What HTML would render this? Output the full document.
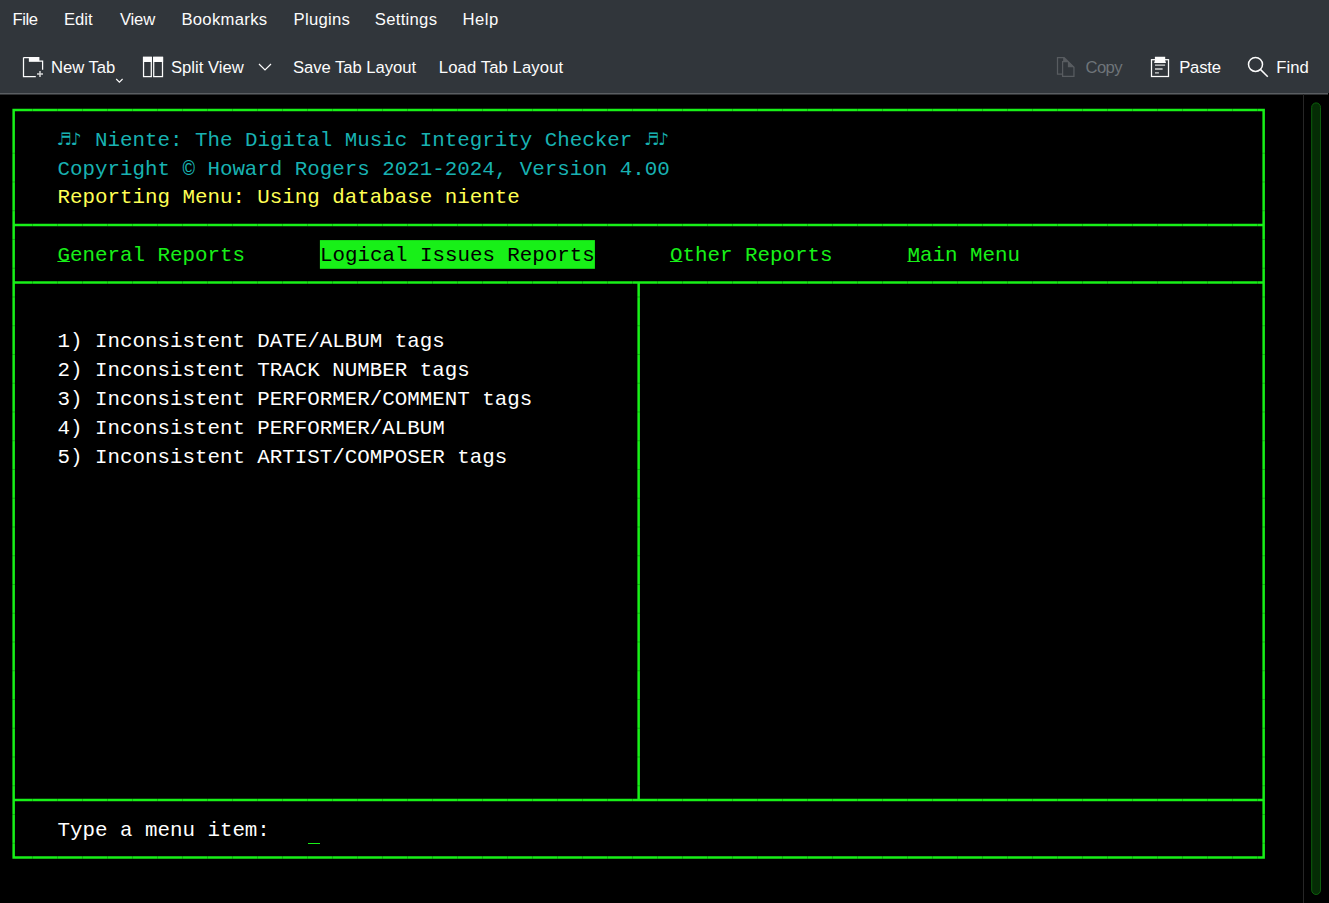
<!DOCTYPE html>
<html lang="en"><head><meta charset="utf-8"><title>Niente - Konsole</title>
<style>
html,body{margin:0;padding:0}
body{width:1329px;height:903px;background:#000;position:relative;overflow:hidden;font-family:"Liberation Sans",sans-serif}
#chrome{position:absolute;left:0;top:0;width:1329px;height:93px;background:#31363b}
.ui{position:absolute;font-size:16.67px;line-height:19px;white-space:pre;color:#fcfcfc}
.t{position:absolute;font-family:"Liberation Mono","DejaVu Sans Mono",monospace;font-size:20.833px;line-height:28px;height:28px;white-space:pre;letter-spacing:0}
.n{position:absolute;width:12.5px;text-align:center;font-family:"DejaVu Sans",sans-serif;font-size:17px;line-height:22px;height:22px}
u{text-decoration:underline;text-decoration-thickness:1.2px;text-underline-offset:0.4px;text-decoration-skip-ink:none}
svg{position:absolute;left:0;top:0}
</style></head>
<body>
<div id="chrome"></div>
<div class="ui" style="left:12.4px;top:10px;letter-spacing:-0.4px;color:#fcfcfc">File</div>
<div class="ui" style="left:64.0px;top:10px;letter-spacing:0.0px;color:#fcfcfc">Edit</div>
<div class="ui" style="left:119.9px;top:10px;letter-spacing:-0.167px;color:#fcfcfc">View</div>
<div class="ui" style="left:181.4px;top:10px;letter-spacing:0.3px;color:#fcfcfc">Bookmarks</div>
<div class="ui" style="left:293.5px;top:10px;letter-spacing:0.283px;color:#fcfcfc">Plugins</div>
<div class="ui" style="left:374.8px;top:10px;letter-spacing:0.286px;color:#fcfcfc">Settings</div>
<div class="ui" style="left:462.6px;top:10px;letter-spacing:0.433px;color:#fcfcfc">Help</div>
<div class="ui" style="left:51.1px;top:58px;letter-spacing:-0.067px;color:#fcfcfc">New Tab</div>
<div class="ui" style="left:171.0px;top:58px;letter-spacing:-0.011px;color:#fcfcfc">Split View</div>
<div class="ui" style="left:293.0px;top:58px;letter-spacing:-0.05px;color:#fcfcfc">Save Tab Layout</div>
<div class="ui" style="left:438.8px;top:58px;letter-spacing:0.107px;color:#fcfcfc">Load Tab Layout</div>
<div class="ui" style="left:1085.4px;top:58px;letter-spacing:-0.533px;color:#6e7479">Copy</div>
<div class="ui" style="left:1179.2px;top:58px;letter-spacing:-0.188px;color:#fcfcfc">Paste</div>
<div class="ui" style="left:1276.3px;top:58px;letter-spacing:0.0px;color:#fcfcfc">Find</div>
<svg width="1329" height="903" viewBox="0 0 1329 903">
<path d="M23.5 57.6 H29.5 V61 H42.6 V69.8 M35.8 76.5 H23.5 V57.6" fill="none" stroke="#fcfcfc" stroke-width="1.25"/>
<path d="M29 57 H39.4 V61.3 H29 Z" fill="#fcfcfc"/>
<path d="M37 74 H43 M40 71 V77" stroke="#d4d5d6" stroke-width="1.5" fill="none"/>
<path d="M116.2 79 L119.4 82.2 L122.6 79" fill="none" stroke="#fcfcfc" stroke-width="1.1"/>
<rect x="143.55" y="57.4" width="7.75" height="19.2" fill="none" stroke="#fcfcfc" stroke-width="1.25"/>
<rect x="142.95" y="56.8" width="8.95" height="5.2" fill="#fcfcfc"/>
<rect x="153.7" y="57.4" width="8.8" height="19.2" fill="none" stroke="#fcfcfc" stroke-width="1.25"/>
<rect x="153.1" y="56.8" width="10.0" height="5.2" fill="#fcfcfc"/>
<path d="M259 64 L265 70 L271 64" fill="none" stroke="#fcfcfc" stroke-width="1.2"/>
<path d="M1062.2 74 H1057.5 V57.7 H1064.4" fill="none" stroke="#585c60" stroke-width="1.25"/>
<path d="M1063.1 57.2 H1064.7 L1068.5 61 H1063.1 Z" fill="#585c60"/>
<path d="M1062.6 61.5 H1068.2 L1073.95 67.2 V76.35 H1062.6 Z" fill="none" stroke="#585c60" stroke-width="1.25"/>
<path d="M1067.9 60.9 L1074.6 67.3 H1067.9 Z" fill="#585c60"/>
<rect x="1151.5" y="59.7" width="17" height="16.8" fill="none" stroke="#fcfcfc" stroke-width="1.25"/>
<path d="M1154.9 56.8 H1165.2 V60.5 L1166 63 H1154.1 L1154.9 60.5 Z" fill="#fcfcfc"/>
<path d="M1155 65.1 H1165.1 M1155 69 H1162.6 M1155 72.8 H1158.9" stroke="#d6d7d8" stroke-width="1.35" fill="none"/>
<circle cx="1255.5" cy="64.4" r="7.0" fill="none" stroke="#fcfcfc" stroke-width="1.5"/>
<path d="M1260.6 69.6 L1267.8 76.7" stroke="#fcfcfc" stroke-width="1.5" fill="none"/>
<path d="M12.40 108.65h1252.50v2.50h-1252.50zM12.40 223.65h1252.50v2.50h-1252.50zM12.40 281.15h1252.50v2.50h-1252.50zM12.40 798.65h1252.50v2.50h-1252.50zM12.40 856.15h1252.50v2.50h-1252.50zM12.40 108.65h2.50v750.00h-2.50zM1262.40 108.65h2.50v750.00h-2.50zM637.40 281.15h2.50v520.00h-2.50z" fill="#18f018" fill-rule="nonzero"/>
<rect x="32.00" y="108.45" width="1" height="2.9" fill="#000" opacity="0.22"/>
<rect x="57.00" y="108.45" width="1" height="2.9" fill="#000" opacity="0.22"/>
<rect x="82.00" y="108.45" width="1" height="2.9" fill="#000" opacity="0.22"/>
<rect x="107.00" y="108.45" width="1" height="2.9" fill="#000" opacity="0.22"/>
<rect x="132.00" y="108.45" width="1" height="2.9" fill="#000" opacity="0.22"/>
<rect x="157.00" y="108.45" width="1" height="2.9" fill="#000" opacity="0.22"/>
<rect x="182.00" y="108.45" width="1" height="2.9" fill="#000" opacity="0.22"/>
<rect x="207.00" y="108.45" width="1" height="2.9" fill="#000" opacity="0.22"/>
<rect x="232.00" y="108.45" width="1" height="2.9" fill="#000" opacity="0.22"/>
<rect x="257.00" y="108.45" width="1" height="2.9" fill="#000" opacity="0.22"/>
<rect x="282.00" y="108.45" width="1" height="2.9" fill="#000" opacity="0.22"/>
<rect x="307.00" y="108.45" width="1" height="2.9" fill="#000" opacity="0.22"/>
<rect x="332.00" y="108.45" width="1" height="2.9" fill="#000" opacity="0.22"/>
<rect x="357.00" y="108.45" width="1" height="2.9" fill="#000" opacity="0.22"/>
<rect x="382.00" y="108.45" width="1" height="2.9" fill="#000" opacity="0.22"/>
<rect x="407.00" y="108.45" width="1" height="2.9" fill="#000" opacity="0.22"/>
<rect x="432.00" y="108.45" width="1" height="2.9" fill="#000" opacity="0.22"/>
<rect x="457.00" y="108.45" width="1" height="2.9" fill="#000" opacity="0.22"/>
<rect x="482.00" y="108.45" width="1" height="2.9" fill="#000" opacity="0.22"/>
<rect x="507.00" y="108.45" width="1" height="2.9" fill="#000" opacity="0.22"/>
<rect x="532.00" y="108.45" width="1" height="2.9" fill="#000" opacity="0.22"/>
<rect x="557.00" y="108.45" width="1" height="2.9" fill="#000" opacity="0.22"/>
<rect x="582.00" y="108.45" width="1" height="2.9" fill="#000" opacity="0.22"/>
<rect x="607.00" y="108.45" width="1" height="2.9" fill="#000" opacity="0.22"/>
<rect x="632.00" y="108.45" width="1" height="2.9" fill="#000" opacity="0.22"/>
<rect x="657.00" y="108.45" width="1" height="2.9" fill="#000" opacity="0.22"/>
<rect x="682.00" y="108.45" width="1" height="2.9" fill="#000" opacity="0.22"/>
<rect x="707.00" y="108.45" width="1" height="2.9" fill="#000" opacity="0.22"/>
<rect x="732.00" y="108.45" width="1" height="2.9" fill="#000" opacity="0.22"/>
<rect x="757.00" y="108.45" width="1" height="2.9" fill="#000" opacity="0.22"/>
<rect x="782.00" y="108.45" width="1" height="2.9" fill="#000" opacity="0.22"/>
<rect x="807.00" y="108.45" width="1" height="2.9" fill="#000" opacity="0.22"/>
<rect x="832.00" y="108.45" width="1" height="2.9" fill="#000" opacity="0.22"/>
<rect x="857.00" y="108.45" width="1" height="2.9" fill="#000" opacity="0.22"/>
<rect x="882.00" y="108.45" width="1" height="2.9" fill="#000" opacity="0.22"/>
<rect x="907.00" y="108.45" width="1" height="2.9" fill="#000" opacity="0.22"/>
<rect x="932.00" y="108.45" width="1" height="2.9" fill="#000" opacity="0.22"/>
<rect x="957.00" y="108.45" width="1" height="2.9" fill="#000" opacity="0.22"/>
<rect x="982.00" y="108.45" width="1" height="2.9" fill="#000" opacity="0.22"/>
<rect x="1007.00" y="108.45" width="1" height="2.9" fill="#000" opacity="0.22"/>
<rect x="1032.00" y="108.45" width="1" height="2.9" fill="#000" opacity="0.22"/>
<rect x="1057.00" y="108.45" width="1" height="2.9" fill="#000" opacity="0.22"/>
<rect x="1082.00" y="108.45" width="1" height="2.9" fill="#000" opacity="0.22"/>
<rect x="1107.00" y="108.45" width="1" height="2.9" fill="#000" opacity="0.22"/>
<rect x="1132.00" y="108.45" width="1" height="2.9" fill="#000" opacity="0.22"/>
<rect x="1157.00" y="108.45" width="1" height="2.9" fill="#000" opacity="0.22"/>
<rect x="1182.00" y="108.45" width="1" height="2.9" fill="#000" opacity="0.22"/>
<rect x="1207.00" y="108.45" width="1" height="2.9" fill="#000" opacity="0.22"/>
<rect x="1232.00" y="108.45" width="1" height="2.9" fill="#000" opacity="0.22"/>
<rect x="1257.00" y="108.45" width="1" height="2.9" fill="#000" opacity="0.22"/>
<rect x="32.00" y="223.45" width="1" height="2.9" fill="#000" opacity="0.22"/>
<rect x="57.00" y="223.45" width="1" height="2.9" fill="#000" opacity="0.22"/>
<rect x="82.00" y="223.45" width="1" height="2.9" fill="#000" opacity="0.22"/>
<rect x="107.00" y="223.45" width="1" height="2.9" fill="#000" opacity="0.22"/>
<rect x="132.00" y="223.45" width="1" height="2.9" fill="#000" opacity="0.22"/>
<rect x="157.00" y="223.45" width="1" height="2.9" fill="#000" opacity="0.22"/>
<rect x="182.00" y="223.45" width="1" height="2.9" fill="#000" opacity="0.22"/>
<rect x="207.00" y="223.45" width="1" height="2.9" fill="#000" opacity="0.22"/>
<rect x="232.00" y="223.45" width="1" height="2.9" fill="#000" opacity="0.22"/>
<rect x="257.00" y="223.45" width="1" height="2.9" fill="#000" opacity="0.22"/>
<rect x="282.00" y="223.45" width="1" height="2.9" fill="#000" opacity="0.22"/>
<rect x="307.00" y="223.45" width="1" height="2.9" fill="#000" opacity="0.22"/>
<rect x="332.00" y="223.45" width="1" height="2.9" fill="#000" opacity="0.22"/>
<rect x="357.00" y="223.45" width="1" height="2.9" fill="#000" opacity="0.22"/>
<rect x="382.00" y="223.45" width="1" height="2.9" fill="#000" opacity="0.22"/>
<rect x="407.00" y="223.45" width="1" height="2.9" fill="#000" opacity="0.22"/>
<rect x="432.00" y="223.45" width="1" height="2.9" fill="#000" opacity="0.22"/>
<rect x="457.00" y="223.45" width="1" height="2.9" fill="#000" opacity="0.22"/>
<rect x="482.00" y="223.45" width="1" height="2.9" fill="#000" opacity="0.22"/>
<rect x="507.00" y="223.45" width="1" height="2.9" fill="#000" opacity="0.22"/>
<rect x="532.00" y="223.45" width="1" height="2.9" fill="#000" opacity="0.22"/>
<rect x="557.00" y="223.45" width="1" height="2.9" fill="#000" opacity="0.22"/>
<rect x="582.00" y="223.45" width="1" height="2.9" fill="#000" opacity="0.22"/>
<rect x="607.00" y="223.45" width="1" height="2.9" fill="#000" opacity="0.22"/>
<rect x="632.00" y="223.45" width="1" height="2.9" fill="#000" opacity="0.22"/>
<rect x="657.00" y="223.45" width="1" height="2.9" fill="#000" opacity="0.22"/>
<rect x="682.00" y="223.45" width="1" height="2.9" fill="#000" opacity="0.22"/>
<rect x="707.00" y="223.45" width="1" height="2.9" fill="#000" opacity="0.22"/>
<rect x="732.00" y="223.45" width="1" height="2.9" fill="#000" opacity="0.22"/>
<rect x="757.00" y="223.45" width="1" height="2.9" fill="#000" opacity="0.22"/>
<rect x="782.00" y="223.45" width="1" height="2.9" fill="#000" opacity="0.22"/>
<rect x="807.00" y="223.45" width="1" height="2.9" fill="#000" opacity="0.22"/>
<rect x="832.00" y="223.45" width="1" height="2.9" fill="#000" opacity="0.22"/>
<rect x="857.00" y="223.45" width="1" height="2.9" fill="#000" opacity="0.22"/>
<rect x="882.00" y="223.45" width="1" height="2.9" fill="#000" opacity="0.22"/>
<rect x="907.00" y="223.45" width="1" height="2.9" fill="#000" opacity="0.22"/>
<rect x="932.00" y="223.45" width="1" height="2.9" fill="#000" opacity="0.22"/>
<rect x="957.00" y="223.45" width="1" height="2.9" fill="#000" opacity="0.22"/>
<rect x="982.00" y="223.45" width="1" height="2.9" fill="#000" opacity="0.22"/>
<rect x="1007.00" y="223.45" width="1" height="2.9" fill="#000" opacity="0.22"/>
<rect x="1032.00" y="223.45" width="1" height="2.9" fill="#000" opacity="0.22"/>
<rect x="1057.00" y="223.45" width="1" height="2.9" fill="#000" opacity="0.22"/>
<rect x="1082.00" y="223.45" width="1" height="2.9" fill="#000" opacity="0.22"/>
<rect x="1107.00" y="223.45" width="1" height="2.9" fill="#000" opacity="0.22"/>
<rect x="1132.00" y="223.45" width="1" height="2.9" fill="#000" opacity="0.22"/>
<rect x="1157.00" y="223.45" width="1" height="2.9" fill="#000" opacity="0.22"/>
<rect x="1182.00" y="223.45" width="1" height="2.9" fill="#000" opacity="0.22"/>
<rect x="1207.00" y="223.45" width="1" height="2.9" fill="#000" opacity="0.22"/>
<rect x="1232.00" y="223.45" width="1" height="2.9" fill="#000" opacity="0.22"/>
<rect x="1257.00" y="223.45" width="1" height="2.9" fill="#000" opacity="0.22"/>
<rect x="32.00" y="280.95" width="1" height="2.9" fill="#000" opacity="0.22"/>
<rect x="57.00" y="280.95" width="1" height="2.9" fill="#000" opacity="0.22"/>
<rect x="82.00" y="280.95" width="1" height="2.9" fill="#000" opacity="0.22"/>
<rect x="107.00" y="280.95" width="1" height="2.9" fill="#000" opacity="0.22"/>
<rect x="132.00" y="280.95" width="1" height="2.9" fill="#000" opacity="0.22"/>
<rect x="157.00" y="280.95" width="1" height="2.9" fill="#000" opacity="0.22"/>
<rect x="182.00" y="280.95" width="1" height="2.9" fill="#000" opacity="0.22"/>
<rect x="207.00" y="280.95" width="1" height="2.9" fill="#000" opacity="0.22"/>
<rect x="232.00" y="280.95" width="1" height="2.9" fill="#000" opacity="0.22"/>
<rect x="257.00" y="280.95" width="1" height="2.9" fill="#000" opacity="0.22"/>
<rect x="282.00" y="280.95" width="1" height="2.9" fill="#000" opacity="0.22"/>
<rect x="307.00" y="280.95" width="1" height="2.9" fill="#000" opacity="0.22"/>
<rect x="332.00" y="280.95" width="1" height="2.9" fill="#000" opacity="0.22"/>
<rect x="357.00" y="280.95" width="1" height="2.9" fill="#000" opacity="0.22"/>
<rect x="382.00" y="280.95" width="1" height="2.9" fill="#000" opacity="0.22"/>
<rect x="407.00" y="280.95" width="1" height="2.9" fill="#000" opacity="0.22"/>
<rect x="432.00" y="280.95" width="1" height="2.9" fill="#000" opacity="0.22"/>
<rect x="457.00" y="280.95" width="1" height="2.9" fill="#000" opacity="0.22"/>
<rect x="482.00" y="280.95" width="1" height="2.9" fill="#000" opacity="0.22"/>
<rect x="507.00" y="280.95" width="1" height="2.9" fill="#000" opacity="0.22"/>
<rect x="532.00" y="280.95" width="1" height="2.9" fill="#000" opacity="0.22"/>
<rect x="557.00" y="280.95" width="1" height="2.9" fill="#000" opacity="0.22"/>
<rect x="582.00" y="280.95" width="1" height="2.9" fill="#000" opacity="0.22"/>
<rect x="607.00" y="280.95" width="1" height="2.9" fill="#000" opacity="0.22"/>
<rect x="632.00" y="280.95" width="1" height="2.9" fill="#000" opacity="0.22"/>
<rect x="657.00" y="280.95" width="1" height="2.9" fill="#000" opacity="0.22"/>
<rect x="682.00" y="280.95" width="1" height="2.9" fill="#000" opacity="0.22"/>
<rect x="707.00" y="280.95" width="1" height="2.9" fill="#000" opacity="0.22"/>
<rect x="732.00" y="280.95" width="1" height="2.9" fill="#000" opacity="0.22"/>
<rect x="757.00" y="280.95" width="1" height="2.9" fill="#000" opacity="0.22"/>
<rect x="782.00" y="280.95" width="1" height="2.9" fill="#000" opacity="0.22"/>
<rect x="807.00" y="280.95" width="1" height="2.9" fill="#000" opacity="0.22"/>
<rect x="832.00" y="280.95" width="1" height="2.9" fill="#000" opacity="0.22"/>
<rect x="857.00" y="280.95" width="1" height="2.9" fill="#000" opacity="0.22"/>
<rect x="882.00" y="280.95" width="1" height="2.9" fill="#000" opacity="0.22"/>
<rect x="907.00" y="280.95" width="1" height="2.9" fill="#000" opacity="0.22"/>
<rect x="932.00" y="280.95" width="1" height="2.9" fill="#000" opacity="0.22"/>
<rect x="957.00" y="280.95" width="1" height="2.9" fill="#000" opacity="0.22"/>
<rect x="982.00" y="280.95" width="1" height="2.9" fill="#000" opacity="0.22"/>
<rect x="1007.00" y="280.95" width="1" height="2.9" fill="#000" opacity="0.22"/>
<rect x="1032.00" y="280.95" width="1" height="2.9" fill="#000" opacity="0.22"/>
<rect x="1057.00" y="280.95" width="1" height="2.9" fill="#000" opacity="0.22"/>
<rect x="1082.00" y="280.95" width="1" height="2.9" fill="#000" opacity="0.22"/>
<rect x="1107.00" y="280.95" width="1" height="2.9" fill="#000" opacity="0.22"/>
<rect x="1132.00" y="280.95" width="1" height="2.9" fill="#000" opacity="0.22"/>
<rect x="1157.00" y="280.95" width="1" height="2.9" fill="#000" opacity="0.22"/>
<rect x="1182.00" y="280.95" width="1" height="2.9" fill="#000" opacity="0.22"/>
<rect x="1207.00" y="280.95" width="1" height="2.9" fill="#000" opacity="0.22"/>
<rect x="1232.00" y="280.95" width="1" height="2.9" fill="#000" opacity="0.22"/>
<rect x="1257.00" y="280.95" width="1" height="2.9" fill="#000" opacity="0.22"/>
<rect x="32.00" y="798.45" width="1" height="2.9" fill="#000" opacity="0.22"/>
<rect x="57.00" y="798.45" width="1" height="2.9" fill="#000" opacity="0.22"/>
<rect x="82.00" y="798.45" width="1" height="2.9" fill="#000" opacity="0.22"/>
<rect x="107.00" y="798.45" width="1" height="2.9" fill="#000" opacity="0.22"/>
<rect x="132.00" y="798.45" width="1" height="2.9" fill="#000" opacity="0.22"/>
<rect x="157.00" y="798.45" width="1" height="2.9" fill="#000" opacity="0.22"/>
<rect x="182.00" y="798.45" width="1" height="2.9" fill="#000" opacity="0.22"/>
<rect x="207.00" y="798.45" width="1" height="2.9" fill="#000" opacity="0.22"/>
<rect x="232.00" y="798.45" width="1" height="2.9" fill="#000" opacity="0.22"/>
<rect x="257.00" y="798.45" width="1" height="2.9" fill="#000" opacity="0.22"/>
<rect x="282.00" y="798.45" width="1" height="2.9" fill="#000" opacity="0.22"/>
<rect x="307.00" y="798.45" width="1" height="2.9" fill="#000" opacity="0.22"/>
<rect x="332.00" y="798.45" width="1" height="2.9" fill="#000" opacity="0.22"/>
<rect x="357.00" y="798.45" width="1" height="2.9" fill="#000" opacity="0.22"/>
<rect x="382.00" y="798.45" width="1" height="2.9" fill="#000" opacity="0.22"/>
<rect x="407.00" y="798.45" width="1" height="2.9" fill="#000" opacity="0.22"/>
<rect x="432.00" y="798.45" width="1" height="2.9" fill="#000" opacity="0.22"/>
<rect x="457.00" y="798.45" width="1" height="2.9" fill="#000" opacity="0.22"/>
<rect x="482.00" y="798.45" width="1" height="2.9" fill="#000" opacity="0.22"/>
<rect x="507.00" y="798.45" width="1" height="2.9" fill="#000" opacity="0.22"/>
<rect x="532.00" y="798.45" width="1" height="2.9" fill="#000" opacity="0.22"/>
<rect x="557.00" y="798.45" width="1" height="2.9" fill="#000" opacity="0.22"/>
<rect x="582.00" y="798.45" width="1" height="2.9" fill="#000" opacity="0.22"/>
<rect x="607.00" y="798.45" width="1" height="2.9" fill="#000" opacity="0.22"/>
<rect x="632.00" y="798.45" width="1" height="2.9" fill="#000" opacity="0.22"/>
<rect x="657.00" y="798.45" width="1" height="2.9" fill="#000" opacity="0.22"/>
<rect x="682.00" y="798.45" width="1" height="2.9" fill="#000" opacity="0.22"/>
<rect x="707.00" y="798.45" width="1" height="2.9" fill="#000" opacity="0.22"/>
<rect x="732.00" y="798.45" width="1" height="2.9" fill="#000" opacity="0.22"/>
<rect x="757.00" y="798.45" width="1" height="2.9" fill="#000" opacity="0.22"/>
<rect x="782.00" y="798.45" width="1" height="2.9" fill="#000" opacity="0.22"/>
<rect x="807.00" y="798.45" width="1" height="2.9" fill="#000" opacity="0.22"/>
<rect x="832.00" y="798.45" width="1" height="2.9" fill="#000" opacity="0.22"/>
<rect x="857.00" y="798.45" width="1" height="2.9" fill="#000" opacity="0.22"/>
<rect x="882.00" y="798.45" width="1" height="2.9" fill="#000" opacity="0.22"/>
<rect x="907.00" y="798.45" width="1" height="2.9" fill="#000" opacity="0.22"/>
<rect x="932.00" y="798.45" width="1" height="2.9" fill="#000" opacity="0.22"/>
<rect x="957.00" y="798.45" width="1" height="2.9" fill="#000" opacity="0.22"/>
<rect x="982.00" y="798.45" width="1" height="2.9" fill="#000" opacity="0.22"/>
<rect x="1007.00" y="798.45" width="1" height="2.9" fill="#000" opacity="0.22"/>
<rect x="1032.00" y="798.45" width="1" height="2.9" fill="#000" opacity="0.22"/>
<rect x="1057.00" y="798.45" width="1" height="2.9" fill="#000" opacity="0.22"/>
<rect x="1082.00" y="798.45" width="1" height="2.9" fill="#000" opacity="0.22"/>
<rect x="1107.00" y="798.45" width="1" height="2.9" fill="#000" opacity="0.22"/>
<rect x="1132.00" y="798.45" width="1" height="2.9" fill="#000" opacity="0.22"/>
<rect x="1157.00" y="798.45" width="1" height="2.9" fill="#000" opacity="0.22"/>
<rect x="1182.00" y="798.45" width="1" height="2.9" fill="#000" opacity="0.22"/>
<rect x="1207.00" y="798.45" width="1" height="2.9" fill="#000" opacity="0.22"/>
<rect x="1232.00" y="798.45" width="1" height="2.9" fill="#000" opacity="0.22"/>
<rect x="1257.00" y="798.45" width="1" height="2.9" fill="#000" opacity="0.22"/>
<rect x="32.00" y="855.95" width="1" height="2.9" fill="#000" opacity="0.22"/>
<rect x="57.00" y="855.95" width="1" height="2.9" fill="#000" opacity="0.22"/>
<rect x="82.00" y="855.95" width="1" height="2.9" fill="#000" opacity="0.22"/>
<rect x="107.00" y="855.95" width="1" height="2.9" fill="#000" opacity="0.22"/>
<rect x="132.00" y="855.95" width="1" height="2.9" fill="#000" opacity="0.22"/>
<rect x="157.00" y="855.95" width="1" height="2.9" fill="#000" opacity="0.22"/>
<rect x="182.00" y="855.95" width="1" height="2.9" fill="#000" opacity="0.22"/>
<rect x="207.00" y="855.95" width="1" height="2.9" fill="#000" opacity="0.22"/>
<rect x="232.00" y="855.95" width="1" height="2.9" fill="#000" opacity="0.22"/>
<rect x="257.00" y="855.95" width="1" height="2.9" fill="#000" opacity="0.22"/>
<rect x="282.00" y="855.95" width="1" height="2.9" fill="#000" opacity="0.22"/>
<rect x="307.00" y="855.95" width="1" height="2.9" fill="#000" opacity="0.22"/>
<rect x="332.00" y="855.95" width="1" height="2.9" fill="#000" opacity="0.22"/>
<rect x="357.00" y="855.95" width="1" height="2.9" fill="#000" opacity="0.22"/>
<rect x="382.00" y="855.95" width="1" height="2.9" fill="#000" opacity="0.22"/>
<rect x="407.00" y="855.95" width="1" height="2.9" fill="#000" opacity="0.22"/>
<rect x="432.00" y="855.95" width="1" height="2.9" fill="#000" opacity="0.22"/>
<rect x="457.00" y="855.95" width="1" height="2.9" fill="#000" opacity="0.22"/>
<rect x="482.00" y="855.95" width="1" height="2.9" fill="#000" opacity="0.22"/>
<rect x="507.00" y="855.95" width="1" height="2.9" fill="#000" opacity="0.22"/>
<rect x="532.00" y="855.95" width="1" height="2.9" fill="#000" opacity="0.22"/>
<rect x="557.00" y="855.95" width="1" height="2.9" fill="#000" opacity="0.22"/>
<rect x="582.00" y="855.95" width="1" height="2.9" fill="#000" opacity="0.22"/>
<rect x="607.00" y="855.95" width="1" height="2.9" fill="#000" opacity="0.22"/>
<rect x="632.00" y="855.95" width="1" height="2.9" fill="#000" opacity="0.22"/>
<rect x="657.00" y="855.95" width="1" height="2.9" fill="#000" opacity="0.22"/>
<rect x="682.00" y="855.95" width="1" height="2.9" fill="#000" opacity="0.22"/>
<rect x="707.00" y="855.95" width="1" height="2.9" fill="#000" opacity="0.22"/>
<rect x="732.00" y="855.95" width="1" height="2.9" fill="#000" opacity="0.22"/>
<rect x="757.00" y="855.95" width="1" height="2.9" fill="#000" opacity="0.22"/>
<rect x="782.00" y="855.95" width="1" height="2.9" fill="#000" opacity="0.22"/>
<rect x="807.00" y="855.95" width="1" height="2.9" fill="#000" opacity="0.22"/>
<rect x="832.00" y="855.95" width="1" height="2.9" fill="#000" opacity="0.22"/>
<rect x="857.00" y="855.95" width="1" height="2.9" fill="#000" opacity="0.22"/>
<rect x="882.00" y="855.95" width="1" height="2.9" fill="#000" opacity="0.22"/>
<rect x="907.00" y="855.95" width="1" height="2.9" fill="#000" opacity="0.22"/>
<rect x="932.00" y="855.95" width="1" height="2.9" fill="#000" opacity="0.22"/>
<rect x="957.00" y="855.95" width="1" height="2.9" fill="#000" opacity="0.22"/>
<rect x="982.00" y="855.95" width="1" height="2.9" fill="#000" opacity="0.22"/>
<rect x="1007.00" y="855.95" width="1" height="2.9" fill="#000" opacity="0.22"/>
<rect x="1032.00" y="855.95" width="1" height="2.9" fill="#000" opacity="0.22"/>
<rect x="1057.00" y="855.95" width="1" height="2.9" fill="#000" opacity="0.22"/>
<rect x="1082.00" y="855.95" width="1" height="2.9" fill="#000" opacity="0.22"/>
<rect x="1107.00" y="855.95" width="1" height="2.9" fill="#000" opacity="0.22"/>
<rect x="1132.00" y="855.95" width="1" height="2.9" fill="#000" opacity="0.22"/>
<rect x="1157.00" y="855.95" width="1" height="2.9" fill="#000" opacity="0.22"/>
<rect x="1182.00" y="855.95" width="1" height="2.9" fill="#000" opacity="0.22"/>
<rect x="1207.00" y="855.95" width="1" height="2.9" fill="#000" opacity="0.22"/>
<rect x="1232.00" y="855.95" width="1" height="2.9" fill="#000" opacity="0.22"/>
<rect x="1257.00" y="855.95" width="1" height="2.9" fill="#000" opacity="0.22"/>
<rect x="12.20" y="152.72" width="2.9" height="1" fill="#000" opacity="0.22"/>
<rect x="12.20" y="181.47" width="2.9" height="1" fill="#000" opacity="0.22"/>
<rect x="12.20" y="210.22" width="2.9" height="1" fill="#000" opacity="0.22"/>
<rect x="12.20" y="238.97" width="2.9" height="1" fill="#000" opacity="0.22"/>
<rect x="12.20" y="267.72" width="2.9" height="1" fill="#000" opacity="0.22"/>
<rect x="12.20" y="296.47" width="2.9" height="1" fill="#000" opacity="0.22"/>
<rect x="12.20" y="325.22" width="2.9" height="1" fill="#000" opacity="0.22"/>
<rect x="12.20" y="353.97" width="2.9" height="1" fill="#000" opacity="0.22"/>
<rect x="12.20" y="382.72" width="2.9" height="1" fill="#000" opacity="0.22"/>
<rect x="12.20" y="411.47" width="2.9" height="1" fill="#000" opacity="0.22"/>
<rect x="12.20" y="440.22" width="2.9" height="1" fill="#000" opacity="0.22"/>
<rect x="12.20" y="468.97" width="2.9" height="1" fill="#000" opacity="0.22"/>
<rect x="12.20" y="497.72" width="2.9" height="1" fill="#000" opacity="0.22"/>
<rect x="12.20" y="526.48" width="2.9" height="1" fill="#000" opacity="0.22"/>
<rect x="12.20" y="555.23" width="2.9" height="1" fill="#000" opacity="0.22"/>
<rect x="12.20" y="583.98" width="2.9" height="1" fill="#000" opacity="0.22"/>
<rect x="12.20" y="612.73" width="2.9" height="1" fill="#000" opacity="0.22"/>
<rect x="12.20" y="641.48" width="2.9" height="1" fill="#000" opacity="0.22"/>
<rect x="12.20" y="670.23" width="2.9" height="1" fill="#000" opacity="0.22"/>
<rect x="12.20" y="698.98" width="2.9" height="1" fill="#000" opacity="0.22"/>
<rect x="12.20" y="727.73" width="2.9" height="1" fill="#000" opacity="0.22"/>
<rect x="12.20" y="756.48" width="2.9" height="1" fill="#000" opacity="0.22"/>
<rect x="12.20" y="785.23" width="2.9" height="1" fill="#000" opacity="0.22"/>
<rect x="12.20" y="813.98" width="2.9" height="1" fill="#000" opacity="0.22"/>
<rect x="12.20" y="842.73" width="2.9" height="1" fill="#000" opacity="0.22"/>
<rect x="1262.20" y="152.72" width="2.9" height="1" fill="#000" opacity="0.22"/>
<rect x="1262.20" y="181.47" width="2.9" height="1" fill="#000" opacity="0.22"/>
<rect x="1262.20" y="210.22" width="2.9" height="1" fill="#000" opacity="0.22"/>
<rect x="1262.20" y="238.97" width="2.9" height="1" fill="#000" opacity="0.22"/>
<rect x="1262.20" y="267.72" width="2.9" height="1" fill="#000" opacity="0.22"/>
<rect x="1262.20" y="296.47" width="2.9" height="1" fill="#000" opacity="0.22"/>
<rect x="1262.20" y="325.22" width="2.9" height="1" fill="#000" opacity="0.22"/>
<rect x="1262.20" y="353.97" width="2.9" height="1" fill="#000" opacity="0.22"/>
<rect x="1262.20" y="382.72" width="2.9" height="1" fill="#000" opacity="0.22"/>
<rect x="1262.20" y="411.47" width="2.9" height="1" fill="#000" opacity="0.22"/>
<rect x="1262.20" y="440.22" width="2.9" height="1" fill="#000" opacity="0.22"/>
<rect x="1262.20" y="468.97" width="2.9" height="1" fill="#000" opacity="0.22"/>
<rect x="1262.20" y="497.72" width="2.9" height="1" fill="#000" opacity="0.22"/>
<rect x="1262.20" y="526.48" width="2.9" height="1" fill="#000" opacity="0.22"/>
<rect x="1262.20" y="555.23" width="2.9" height="1" fill="#000" opacity="0.22"/>
<rect x="1262.20" y="583.98" width="2.9" height="1" fill="#000" opacity="0.22"/>
<rect x="1262.20" y="612.73" width="2.9" height="1" fill="#000" opacity="0.22"/>
<rect x="1262.20" y="641.48" width="2.9" height="1" fill="#000" opacity="0.22"/>
<rect x="1262.20" y="670.23" width="2.9" height="1" fill="#000" opacity="0.22"/>
<rect x="1262.20" y="698.98" width="2.9" height="1" fill="#000" opacity="0.22"/>
<rect x="1262.20" y="727.73" width="2.9" height="1" fill="#000" opacity="0.22"/>
<rect x="1262.20" y="756.48" width="2.9" height="1" fill="#000" opacity="0.22"/>
<rect x="1262.20" y="785.23" width="2.9" height="1" fill="#000" opacity="0.22"/>
<rect x="1262.20" y="813.98" width="2.9" height="1" fill="#000" opacity="0.22"/>
<rect x="1262.20" y="842.73" width="2.9" height="1" fill="#000" opacity="0.22"/>
<rect x="637.20" y="296.47" width="2.9" height="1" fill="#000" opacity="0.22"/>
<rect x="637.20" y="325.22" width="2.9" height="1" fill="#000" opacity="0.22"/>
<rect x="637.20" y="353.97" width="2.9" height="1" fill="#000" opacity="0.22"/>
<rect x="637.20" y="382.72" width="2.9" height="1" fill="#000" opacity="0.22"/>
<rect x="637.20" y="411.47" width="2.9" height="1" fill="#000" opacity="0.22"/>
<rect x="637.20" y="440.22" width="2.9" height="1" fill="#000" opacity="0.22"/>
<rect x="637.20" y="468.97" width="2.9" height="1" fill="#000" opacity="0.22"/>
<rect x="637.20" y="497.72" width="2.9" height="1" fill="#000" opacity="0.22"/>
<rect x="637.20" y="526.48" width="2.9" height="1" fill="#000" opacity="0.22"/>
<rect x="637.20" y="555.23" width="2.9" height="1" fill="#000" opacity="0.22"/>
<rect x="637.20" y="583.98" width="2.9" height="1" fill="#000" opacity="0.22"/>
<rect x="637.20" y="612.73" width="2.9" height="1" fill="#000" opacity="0.22"/>
<rect x="637.20" y="641.48" width="2.9" height="1" fill="#000" opacity="0.22"/>
<rect x="637.20" y="670.23" width="2.9" height="1" fill="#000" opacity="0.22"/>
<rect x="637.20" y="698.98" width="2.9" height="1" fill="#000" opacity="0.22"/>
<rect x="637.20" y="727.73" width="2.9" height="1" fill="#000" opacity="0.22"/>
<rect x="637.20" y="756.48" width="2.9" height="1" fill="#000" opacity="0.22"/>
<rect x="637.20" y="785.23" width="2.9" height="1" fill="#000" opacity="0.22"/>
<rect x="0" y="93.05" width="1328" height="1.45" fill="#5f6367"/>
<rect x="1303" y="94" width="1" height="809" fill="#262626"/>
<rect x="1311.7" y="102.9" width="8.8" height="791.6" rx="4.4" ry="4.4" fill="#052c05" stroke="#0c600c" stroke-width="1"/>
</svg>
<div class="t" style="left:94.90px;top:127px;color:#18b2b2;">Niente: The Digital Music Integrity Checker</div>
<div class="n" style="left:56.40px;top:128px;color:#18b2b2">♬</div>
<div class="n" style="left:69.60px;top:128px;color:#18b2b2">♪</div>
<div class="n" style="left:643.90px;top:128px;color:#18b2b2">♬</div>
<div class="n" style="left:657.10px;top:128px;color:#18b2b2">♪</div>
<div class="t" style="left:57.40px;top:156px;color:#18b2b2;">Copyright © Howard Rogers 2021-2024, Version 4.00</div>
<div class="t" style="left:57.40px;top:184px;color:#ffff54;">Reporting Menu: Using database niente</div>
<div class="t" style="left:57.40px;top:242px;color:#18f018;"><u>G</u>eneral Reports</div>
<svg width="1329" height="903" viewBox="0 0 1329 903"><rect x="319.90" y="240.1" width="275.00" height="28.7" fill="#18f018"/></svg>
<div class="t" style="left:319.90px;top:242px;color:#000;">Logical Issues Reports</div>
<div class="t" style="left:669.90px;top:242px;color:#18f018;"><u>O</u>ther Reports</div>
<div class="t" style="left:907.40px;top:242px;color:#18f018;"><u>M</u>ain Menu</div>
<div class="t" style="left:57.40px;top:328px;color:#ffffff;">1) Inconsistent DATE/ALBUM tags</div>
<div class="t" style="left:57.40px;top:357px;color:#ffffff;">2) Inconsistent TRACK NUMBER tags</div>
<div class="t" style="left:57.40px;top:386px;color:#ffffff;">3) Inconsistent PERFORMER/COMMENT tags</div>
<div class="t" style="left:57.40px;top:415px;color:#ffffff;">4) Inconsistent PERFORMER/ALBUM</div>
<div class="t" style="left:57.40px;top:444px;color:#ffffff;">5) Inconsistent ARTIST/COMPOSER tags</div>
<div class="t" style="left:57.40px;top:817px;color:#ffffff;">Type a menu item:</div>
<div style="position:absolute;left:308.00px;top:842.6px;width:11.9px;height:1.3px;background:#18f018"></div>
</body></html>
